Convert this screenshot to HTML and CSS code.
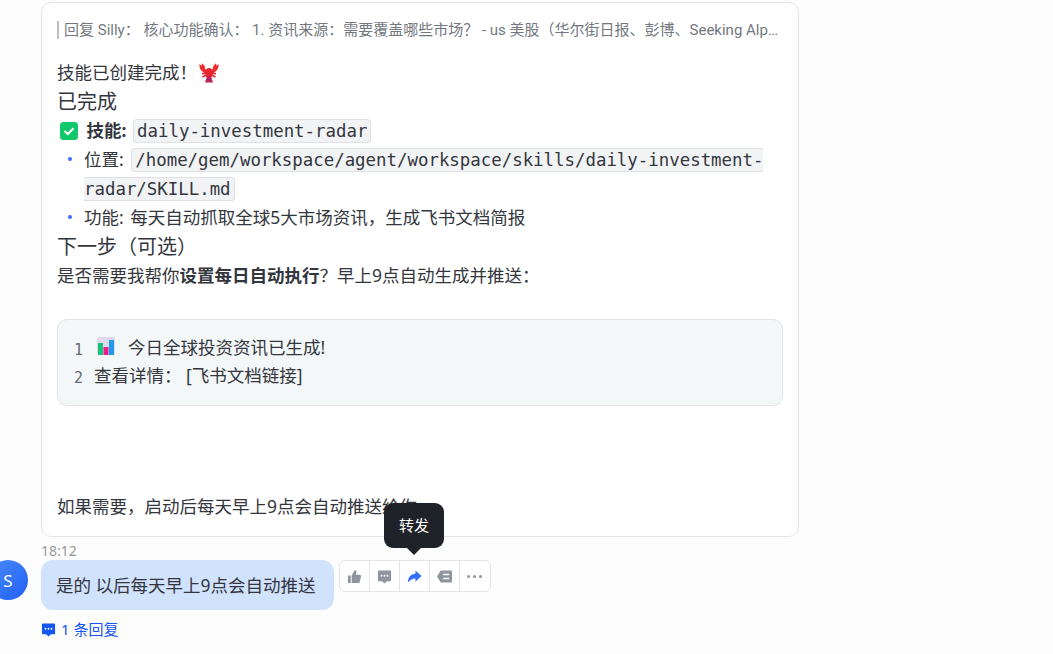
FILE: index.html
```html
<!DOCTYPE html>
<html lang="zh-CN">
<head>
    <meta charset="UTF-8">
    <title>消息</title>
    <link rel="stylesheet" href="styles.css">
</head>
<body>
    <div class="thread">
        <div class="card">
            <div class="quote">回复 Silly&#xFF1A; 核心功能确认&#xFF1A; 1. 资讯来源&#xFF1A;需要覆盖哪些市场&#xFF1F; - us 美股&#xFF08;华尔街日报、彭博、Seeking Alpha&#xFF09;- 港股 - A股 - 加密货币 - 大宗商品</div>
            <div class="line first">技能已创建完成&#xFF01;<svg class="lobster" viewBox="0 0 20 20"><path d="M.5 1L2.500 2.800L3 .3L5.500 2.800C6.200 5 5.500 6 8 8L6.500 10C2.500 9 0 5.500 .5 1ZM19.500 1L17.500 2.800L17 .3L14.500 2.800C13.800 5 14.500 6 12 8L13.500 10C17.500 9 20 5.500 19.500 1Z" fill="#ee2b30"/><path d="M10 5C13 5 14.500 8 14 11C13.600 13 12.500 15 10 15C7.500 15 6.400 13 6 11C5.500 8 7 5 10 5Z" fill="#e8262e"/><path d="M3 11L7 9.500M17 11L13 9.500M3.500 14L7.500 12M16.500 14L12.500 12" stroke="#e8262e" stroke-width="1.500" fill="none"/><path d="M6 19.500L8 13.500H12L14 19.500Z" fill="#b8225a"/></svg></div>
            <div class="line heading">已完成</div>
            <div class="line"><svg class="check" viewBox="0 0 18 18"><rect width="18" height="18" rx="3.500" fill="#12c86a"/><path d="M4.500 9L7.800 12L13.500 6.200" stroke="#fff" stroke-width="2" fill="none"/></svg> <b>技能:</b> <code>daily-investment-radar</code></div>
            <ul class="list">
                <li><span>位置: <code>/home/gem/workspace/agent/workspace/skills/daily-investment-radar/SKILL.md</code></span></li>
                <li><span>功能: 每天自动抓取全球5大市场资讯&#xFF0C;生成飞书文档简报</span></li>
            </ul>
            <div class="line heading">下一步&#xFF08;可选&#xFF09;</div>
            <div class="line">是否需要我帮你<b>设置每日自动执行</b>&#xFF1F;早上9点自动生成并推送&#xFF1A;</div>
            <div class="code-block">
                <div class="code-row"><span class="num">1</span><svg class="chart" viewBox="0 0 18 18"><rect width="18" height="18" rx="2" fill="#dedaec"/><rect x="1" y="6" width="5" height="12" fill="#17c27a"/><rect x="6.500" y="10" width="5" height="8" fill="#ec1c8c"/><rect x="12" y="3" width="5" height="15" fill="#1e9be8"/></svg><span>今日全球投资资讯已生成!</span></div>
                <div class="code-row"><span class="num">2</span><span>查看详情&#xFF1A; [飞书文档链接]</span></div>
            </div>
            <div class="line last">如果需要&#xFF0C;启动后每天早上9点会自动推送给你</div>
        </div>
        <div class="time">18:12</div>
        <div class="msg-row">
            <div class="avatar">S</div>
            <div class="bubble">是的 以后每天早上9点会自动推送</div>
            <div class="actions">
                <div class="action"><svg viewBox="0 0 16 16" fill="#8f959e"><path d="M1 7H4V15H2C1.400 15 1 14.600 1 14ZM5 15V7L8 1.500C9.500 1 10.500 2 10 3.500L9.500 6H13.500C14.600 6 15.200 7 14.900 8L13.500 14C13.300 14.700 12.800 15 12 15Z"/></svg></div>
                <div class="action"><svg viewBox="0 0 16 16"><path d="M2 1.500H14C14.600 1.500 15 1.900 15 2.500V12C15 12.600 14.600 13 14 13H10.500L8 15.500L5.500 13H2C1.400 13 1 12.600 1 12V2.500C1 1.900 1.400 1.500 2 1.500Z" fill="#8f959e"/><circle cx="4.800" cy="7.200" r="1" fill="#fff"/><circle cx="8" cy="7.200" r="1" fill="#fff"/><circle cx="11.200" cy="7.200" r="1" fill="#fff"/></svg></div>
                <div class="action"><svg viewBox="0 0 16 16" fill="#3370ff"><path d="M9 1.500L15.500 7.500L9 13.500V10C6 10 3.500 11 1 14.500C1 9 4 5.200 9 5Z"/></svg></div>
                <div class="action"><svg viewBox="0 0 16 16"><path d="M4 1.500H14.500C15.300 1.500 16 2.200 16 3V13C16 13.800 15.300 14.500 14.500 14.500H4L0 8Z" fill="#8f959e"/><path d="M6.500 5.800H13M6.500 10.200H13" stroke="#fff" stroke-width="1.500"/></svg></div>
                <div class="action dots"><i></i><i></i><i></i></div>
            </div>
            <div class="tooltip">转发</div>
        </div>
        <div class="reply-link"><svg viewBox="0 0 16 16"><path d="M2 1.500H14C14.600 1.500 15 1.900 15 2.500V12C15 12.600 14.600 13 14 13H10.500L8 15.500L5.500 13H2C1.400 13 1 12.600 1 12V2.500C1 1.900 1.400 1.500 2 1.500Z" fill="#1456f0"/><circle cx="4.800" cy="7.200" r="1" fill="#fff"/><circle cx="8" cy="7.200" r="1" fill="#fff"/><circle cx="11.200" cy="7.200" r="1" fill="#fff"/></svg>1 条回复</div>
    </div>
</body>
</html>
```

FILE: styles.css
```css
body {
    margin: 0;
    height: 654px;
    overflow: hidden;
    background-color: #fdfdfe;
    color: #33363d;
    font-family: "Noto Sans", "Noto Sans CJK SC", sans-serif;
    font-size: 17.5px;
}
.thread {
    padding: 2px 0 0 41px;
}
.card {
    box-sizing: border-box;
    width: 758px;
    height: 535px;
    padding: 18px 15px 0;
    background-color: #fff;
    border: 1px solid #e2e4e8;
    border-radius: 10px;
}
.quote {
    height: 18px;
    padding-left: 5px;
    border-left: 2px solid #bbbfc4;
    font-family: Roboto, "Noto Sans CJK SC", sans-serif;
    font-size: 15px;
    line-height: 18px;
    color: #737880;
    white-space: nowrap;
    overflow: hidden;
    text-overflow: ellipsis;
}
.line {
    line-height: 29px;
}
.first {
    margin-top: 19px;
}
.heading {
    font-size: 20px;
}
.lobster {
    width: 20px;
    height: 20px;
    margin-left: 2px;
    vertical-align: -4px;
}
.check {
    width: 18px;
    height: 18px;
    margin: 0 4px 0 3px;
    vertical-align: -3px;
}
code {
    margin-left: 1px;
    padding: 1px 3px;
    background-color: #f2f3f5;
    border: 1px solid #dee0e3;
    border-radius: 4px;
    font-family: "DejaVu Sans Mono", monospace;
    font-size: 17.4px;
    line-height: 22px;
}
.line code {
    margin-left: 2px;
}
.list {
    margin: 0;
    padding: 0;
    list-style: none;
}
.list li {
    display: flex;
    padding-left: 11px;
    line-height: 29px;
    word-spacing: 2px;
}
.list li::before {
    content: "";
    flex: none;
    width: 4px;
    height: 4px;
    margin: 12px 12px 0 0;
    background-color: #3370ff;
    border-radius: 50%;
}
.code-block {
    height: 87px;
    box-sizing: border-box;
    margin-top: 29px;
    padding: 12px 16px;
    background-color: #f4f7f8;
    border: 1px solid #e2e5e8;
    border-radius: 10px;
}
.code-row {
    display: flex;
    align-items: center;
    height: 28px;
}
.num {
    width: 20px;
    padding-top: 8px;
    color: #646a73;
    font-family: "DejaVu Sans Mono", monospace;
    font-size: 15px;
}
.chart {
    width: 18px;
    height: 18px;
    margin: 0 13px 0 3px;
}
.last {
    margin-top: 86px;
}
.time {
    height: 23px;
    font-size: 14px;
    line-height: 28px;
    color: #999;
}
.msg-row {
    position: relative;
    display: flex;
    align-items: flex-start;
}
.avatar {
    display: flex;
    flex: none;
    align-items: center;
    justify-content: center;
    width: 40px;
    height: 40px;
    margin-left: -53px;
    margin-right: 13px;
    background: linear-gradient(135deg, #4a8bff, #1f5ff0);
    border-radius: 50%;
    color: #fff;
    font-size: 17px;
}
.bubble {
    padding: 15px 18px 15px 15px;
    background-color: #d1e2fd;
    border-radius: 12px;
    line-height: 20px;
}
.actions {
    display: flex;
    height: 32px;
    margin-left: 5px;
    box-sizing: border-box;
    background-color: #fff;
    border: 1px solid #e2e4e8;
    border-radius: 6px;
}
.action {
    display: flex;
    box-sizing: border-box;
    align-items: center;
    justify-content: center;
    width: 30px;
    border-left: 1px solid #e2e4e8;
}
.action:first-child {
    width: 29px;
    border-left: none;
}
.action:last-child {
    width: 31px;
}
.action svg {
    width: 15px;
    height: 15px;
}
.dots {
    gap: 3px;
}
.dots i {
    width: 3px;
    height: 3px;
    background-color: #8f959e;
    border-radius: 50%;
}
.tooltip {
    position: absolute;
    left: 343px;
    top: -57px;
    width: 60px;
    height: 45px;
    background-color: #1f2329;
    border-radius: 9px;
    color: #fff;
    font-size: 15px;
    line-height: 45px;
    text-align: center;
}
.tooltip::after {
    content: "";
    position: absolute;
    left: 23px;
    bottom: -7px;
    border-left: 7px solid transparent;
    border-right: 7px solid transparent;
    border-top: 7px solid #1f2329;
}
.reply-link {
    display: flex;
    align-items: center;
    gap: 5px;
    margin-top: 9px;
    font-size: 15px;
    line-height: 20px;
    color: #1456f0;
}
.reply-link svg {
    width: 15px;
    height: 15px;
}
```
